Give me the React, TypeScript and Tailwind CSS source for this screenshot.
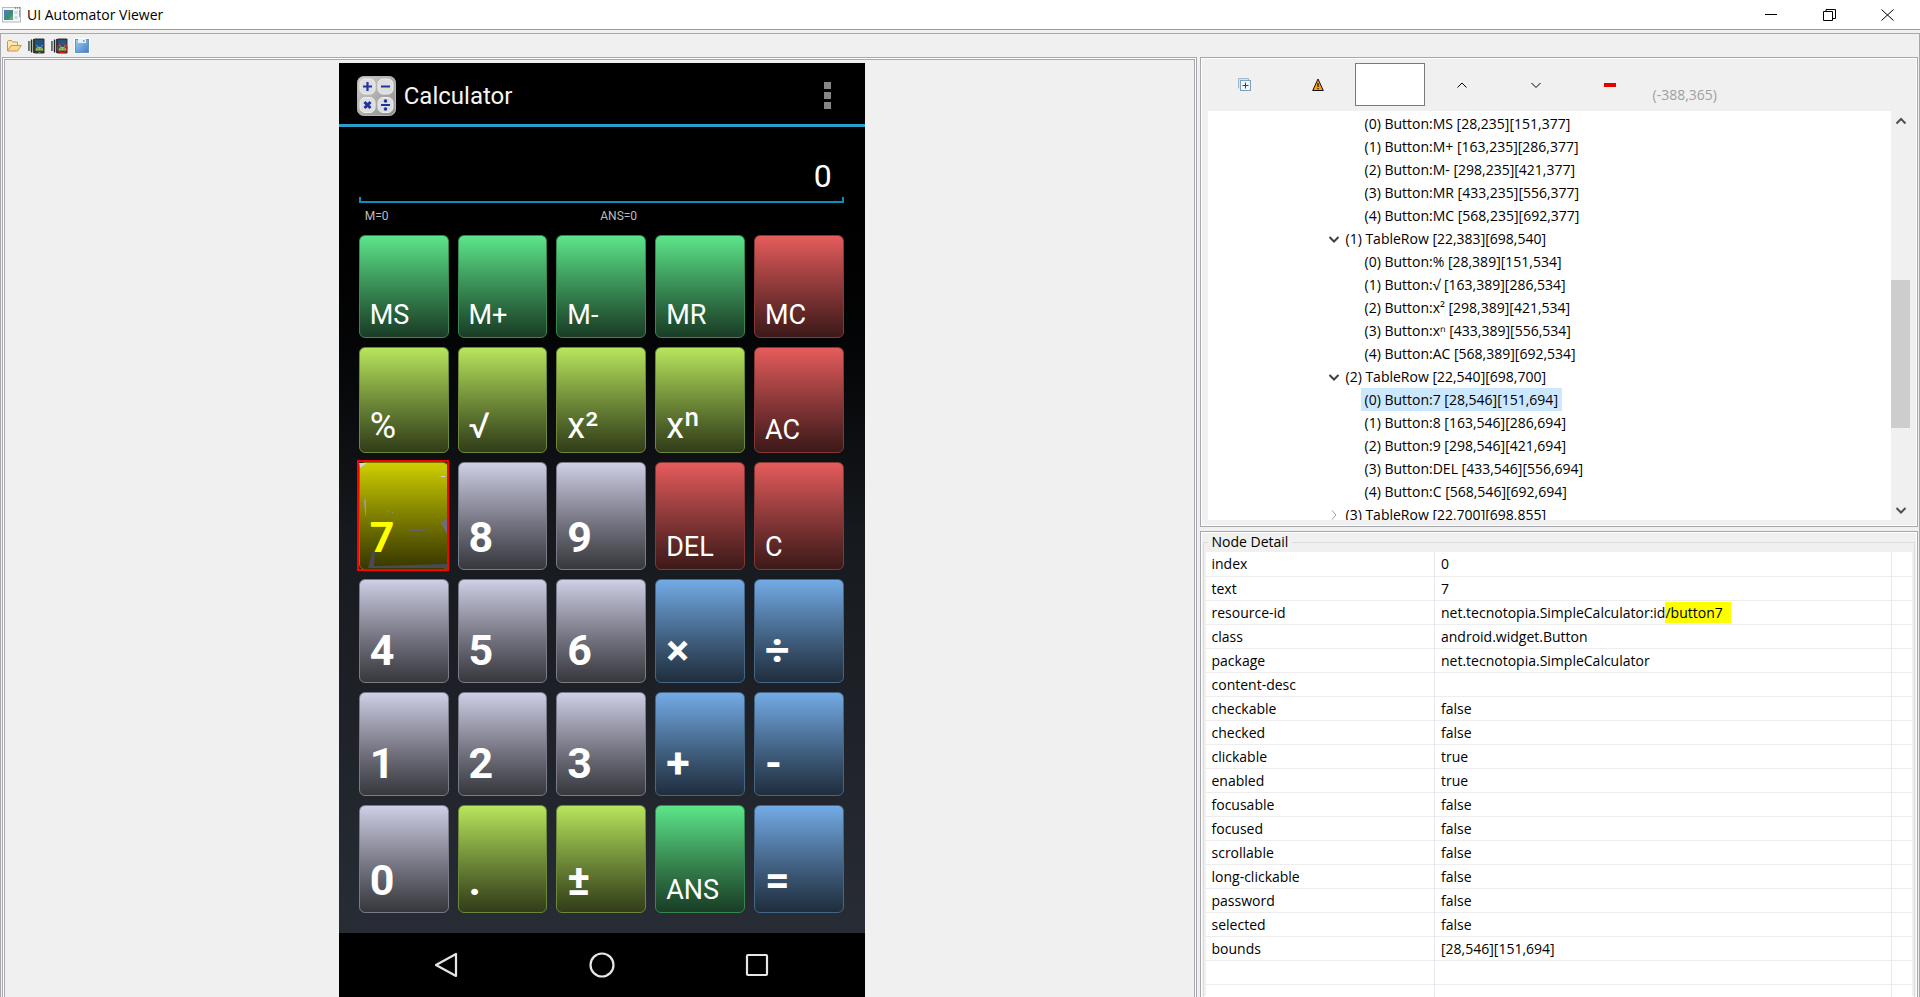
import { ReactNode } from "react";

type Tone = "green" | "lime" | "red" | "gray" | "blue" | "marked";
type Size = "sm" | "md" | "lg";

interface Key {
  label: string;
  tone: Tone;
  size: Size;
}

const tones: Record<Tone, string> = {
  green: "from-[#5ce68a] to-[#193d25] border-[#37884f]",
  lime: "from-[#b8e65c] to-[#313d19] border-[#6d8837]",
  red: "from-[#e65c5c] to-[#3d1919] border-[#883737]",
  gray: "from-[#cfcfe6] to-[#37373d] border-[#7a7a88]",
  blue: "from-[#73abe6] to-[#1f2e3d] border-[#446688]",
  marked: "from-[#cfcf00] to-[#373700] border-[#7a7a00]",
};

const sizes: Record<Size, string> = {
  sm: "text-[27px] leading-8 pb-1.5",
  md: "text-4xl pb-1.5",
  lg: "text-[43px] leading-[48px] font-bold pb-2",
};

const keys: Key[] = [
  { label: "MS", tone: "green", size: "sm" },
  { label: "M+", tone: "green", size: "sm" },
  { label: "M-", tone: "green", size: "sm" },
  { label: "MR", tone: "green", size: "sm" },
  { label: "MC", tone: "red", size: "sm" },
  { label: "%", tone: "lime", size: "md" },
  { label: "√", tone: "lime", size: "md" },
  { label: "x²", tone: "lime", size: "md" },
  { label: "xⁿ", tone: "lime", size: "md" },
  { label: "AC", tone: "red", size: "sm" },
  { label: "7", tone: "marked", size: "lg" },
  { label: "8", tone: "gray", size: "lg" },
  { label: "9", tone: "gray", size: "lg" },
  { label: "DEL", tone: "red", size: "sm" },
  { label: "C", tone: "red", size: "sm" },
  { label: "4", tone: "gray", size: "lg" },
  { label: "5", tone: "gray", size: "lg" },
  { label: "6", tone: "gray", size: "lg" },
  { label: "×", tone: "blue", size: "lg" },
  { label: "÷", tone: "blue", size: "lg" },
  { label: "1", tone: "gray", size: "lg" },
  { label: "2", tone: "gray", size: "lg" },
  { label: "3", tone: "gray", size: "lg" },
  { label: "+", tone: "blue", size: "lg" },
  { label: "-", tone: "blue", size: "lg" },
  { label: "0", tone: "gray", size: "lg" },
  { label: ".", tone: "lime", size: "lg" },
  { label: "±", tone: "lime", size: "lg" },
  { label: "ANS", tone: "green", size: "sm" },
  { label: "=", tone: "blue", size: "lg" },
];

interface TreeNode {
  label: string;
  kind: "leaf" | "open" | "closed";
  selected?: boolean;
}

const nodes: TreeNode[] = [
  { label: "(0) Button:MS [28,235][151,377]", kind: "leaf" },
  { label: "(1) Button:M+ [163,235][286,377]", kind: "leaf" },
  { label: "(2) Button:M- [298,235][421,377]", kind: "leaf" },
  { label: "(3) Button:MR [433,235][556,377]", kind: "leaf" },
  { label: "(4) Button:MC [568,235][692,377]", kind: "leaf" },
  { label: "(1) TableRow [22,383][698,540]", kind: "open" },
  { label: "(0) Button:% [28,389][151,534]", kind: "leaf" },
  { label: "(1) Button:√ [163,389][286,534]", kind: "leaf" },
  { label: "(2) Button:x² [298,389][421,534]", kind: "leaf" },
  { label: "(3) Button:xⁿ [433,389][556,534]", kind: "leaf" },
  { label: "(4) Button:AC [568,389][692,534]", kind: "leaf" },
  { label: "(2) TableRow [22,540][698,700]", kind: "open" },
  { label: "(0) Button:7 [28,546][151,694]", kind: "leaf", selected: true },
  { label: "(1) Button:8 [163,546][286,694]", kind: "leaf" },
  { label: "(2) Button:9 [298,546][421,694]", kind: "leaf" },
  { label: "(3) Button:DEL [433,546][556,694]", kind: "leaf" },
  { label: "(4) Button:C [568,546][692,694]", kind: "leaf" },
  { label: "(3) TableRow [22,700][698,855]", kind: "closed" },
];

const details: [string, ReactNode][] = [
  ["index", "0"],
  ["text", "7"],
  [
    "resource-id",
    <>
      net.tecnotopia.SimpleCalculator:id
      <mark className="bg-[#ffff00] text-black pr-2 py-px">/button7</mark>
    </>,
  ],
  ["class", "android.widget.Button"],
  ["package", "net.tecnotopia.SimpleCalculator"],
  ["content-desc", ""],
  ["checkable", "false"],
  ["checked", "false"],
  ["clickable", "true"],
  ["enabled", "true"],
  ["focusable", "false"],
  ["focused", "false"],
  ["scrollable", "false"],
  ["long-clickable", "false"],
  ["password", "false"],
  ["selected", "false"],
  ["bounds", "[28,546][151,694]"],
  ["", ""],
  ["", ""],
];

const Chevron = ({ dir, className }: { dir: "up" | "down" | "right"; className?: string }) => {
  const d = {
    up: "M1.5 8.5 6 4l4.5 4.5",
    down: "M1.5 4 6 8.5 10.5 4",
    right: "M4 1.5 8 6l-4 4.5",
  }[dir];
  return (
    <svg width="12" height="12" viewBox="0 0 12 12" className={className} fill="none" stroke="currentColor">
      <path d={d} />
    </svg>
  );
};

const AppIcon = () => (
  <svg width="20" height="16" viewBox="0 0 20 16">
    <rect x="0.5" y="0.5" width="18" height="14.500" fill="#f4f5f7" stroke="#b4bac2" />
    <path d="M13 1h1m1 0h1m1 0h1" stroke="#2f4a7a" />
    <rect x="2" y="3" width="9" height="10" fill="#3f8a78" />
    <path d="M2 3h7L2 11z" fill="#4d7fa8" />
    <path d="M6 13l5-6v6z" fill="#57a86c" />
    <path d="M12.500 5.500h3M12.500 10.500h3" stroke="#d3d7de" strokeWidth="3" />
    <path d="M17.500 3v7" stroke="#7fb58c" />
  </svg>
);

const FolderIcon = () => (
  <svg width="16" height="16" viewBox="0 0 16 16">
    <path d="M1.5 13V3.500l1-1h3l1 1.500h5v3" fill="#fbe8b4" stroke="#c9974a" />
    <path d="M1.5 13 5 7.500h10.300L11.500 13z" fill="#fbd98f" stroke="#c9974a" />
  </svg>
);

const DeviceIcon = ({ compressed }: { compressed?: boolean }) => (
  <svg width="17" height="16" viewBox="0 0 17 16">
    <path d="M1 3v10M3.500 1.500v13M5.700 1v14" stroke="#26282a" strokeWidth="1.300" />
    <path d="M2.200 3v10M4.600 2v12" stroke="#9bb8a4" />
    <rect x="6" y="0.500" width="10.500" height="15" rx="1" fill="#3b2f2b" />
    <rect x="7" y="2" width="8.500" height="11.500" fill="#1f5583" />
    <path d="M7.500 12.500c0-5 7.800-5 7.800 0z" fill="#a4c639" />
    <path d="m8.500 7 1 1.500m5-1.500-1 1.500" stroke="#a4c639" />
    <path d="M9.500 10.800h1m2 0h1" stroke="#1f5583" />
    <path d="M10.500 14.500h2" stroke="#8a807a" />
    {compressed && <circle cx="11.200" cy="10" r="4.700" fill="none" stroke="#e01b1b" strokeWidth="1.200" />}
  </svg>
);

const SaveIcon = () => (
  <svg width="16" height="16" viewBox="0 0 16 16">
    <defs>
      <linearGradient id="disk" x1="0" y1="0" x2="1" y2="1">
        <stop offset="0" stopColor="#a5cdf0" />
        <stop offset="1" stopColor="#3f7fc4" />
      </linearGradient>
    </defs>
    <rect width="16" height="16" fill="#fff" />
    <rect x="1.5" y="1.5" width="13" height="13" fill="url(#disk)" stroke="#5f93c9" />
    <rect x="4" y="1" width="8" height="4" fill="#e3effb" />
    <rect x="9" y="2" width="1.500" height="2" fill="#6fa5dc" />
  </svg>
);

const CalculatorIcon = () => (
  <svg width="39" height="40" viewBox="0 0 39 40">
    <defs>
      <linearGradient id="plate" x1="0" y1="0" x2="1" y2="1">
        <stop offset="0" stopColor="#d0d0d0" />
        <stop offset="1" stopColor="#8c8c8c" />
      </linearGradient>
    </defs>
    <rect x="0.5" y="0.5" width="38" height="39" rx="6" fill="url(#plate)" stroke="#b5b5b5" />
    <g fill="#dedede" stroke="#eeeeee">
      <rect x="3" y="3" width="15" height="15" rx="5" />
      <rect x="21" y="3" width="15" height="15" rx="5" />
      <rect x="3" y="21.5" width="15" height="15" rx="5" />
      <rect x="21" y="21.5" width="15" height="15" rx="5" />
    </g>
    <g stroke="#20359f" strokeWidth="2.200" fill="none">
      <path d="M6 10.500h9M10.500 6v9M24 10.500h9M24 29h9" />
      <path d="M7.500 26l6 6m0-6-6 6" strokeWidth="3" />
    </g>
    <circle cx="28.5" cy="25" r="1.800" fill="#20359f" />
    <circle cx="28.5" cy="33" r="1.800" fill="#20359f" />
  </svg>
);

// red bounds of the picked node, with the spots the marker pen missed
const SelectionMarker = () => (
  <svg className="absolute -top-[3px] -left-[3px]" width="92" height="111" viewBox="0 0 92 111">
    <path d="M7 40l2-1v18l-1-5z" fill="#9a9aac" />
    <path d="M84 63l6-5v16z" fill="#6d6d7c" />
    <path d="M52 70h12l6-2v2l-6 1H52z" fill="#63636f" />
    <path d="M16 90l2 2-1 14 73-2v4H11z" fill="#4a4a55" />
    <path d="M84 16h4v1h-4zM2 3h8l-7 5z" fill="#cfcfe6" />
    <path d="M31 51h1v1h-1zM35 52h1v1h-1z" fill="#8d8d9e" />
    <rect x="1" y="1" width="90" height="109" fill="none" stroke="#f00" strokeWidth="2" />
  </svg>
);

const CalcKey = ({ label, tone, size }: Key) => (
  <button
    className={`relative flex items-end rounded-md border bg-linear-to-b pl-2.5 text-left ${tones[tone]} ${
      tone === "marked" ? "text-[#ffff00]" : "text-white"
    }`}
  >
    <span className={sizes[size]}>{label}</span>
    {tone === "marked" && <SelectionMarker />}
  </button>
);

const Phone = () => (
  <div className="flex w-[526px] shrink-0 flex-col bg-black font-[Roboto,sans-serif] text-white">
    <div className="flex h-[61px] items-center pt-1 pr-[34px] pl-[18px]">
      <CalculatorIcon />
      <h1 className="ml-2 grow text-2xl text-gray-100">Calculator</h1>
      <button aria-label="More options" className="flex flex-col gap-[3px]">
        <span className="size-[7px] bg-[#868686]" />
        <span className="size-[7px] bg-[#868686]" />
        <span className="size-[7px] bg-[#868686]" />
      </button>
    </div>
    <div className="flex flex-col border-t-3 border-[#2a9fcb] bg-linear-to-b from-black via-[#16191d] to-[#282c35] pr-[21px] pb-5 pl-5">
      <input
        aria-label="Display"
        readOnly
        value="0"
        className="mt-[30px] h-10 w-full bg-transparent px-3 text-right text-[32px] outline-none"
      />
      <div className="h-[6px] border-2 border-t-0 border-[#0a8fc0]" />
      <div className="grid h-8 grid-cols-2 pt-[5px] pl-1.5 text-xs text-[#bdbdbd]">
        <span>M=0</span>
        <span className="-ml-1">ANS=0</span>
      </div>
      <div className="grid grid-cols-5 grid-rows-[103px_106px_108px_104px_104px_108px] gap-[9px]">
        {keys.map((key) => (
          <CalcKey key={key.label} {...key} />
        ))}
      </div>
    </div>
    <div className="flex grow items-center justify-between px-[95px] text-[#e6e6e6]">
      <button aria-label="Back">
        <svg width="26" height="26" viewBox="0 0 26 26" fill="none" stroke="currentColor" strokeWidth="2.200">
          <path d="M22 2v22L2 13z" strokeLinejoin="round" />
        </svg>
      </button>
      <button aria-label="Home">
        <svg width="26" height="26" viewBox="0 0 26 26" fill="none" stroke="currentColor" strokeWidth="2.200">
          <circle cx="13" cy="13" r="11.500" />
        </svg>
      </button>
      <button aria-label="Recent apps">
        <svg width="26" height="26" viewBox="0 0 26 26" fill="none" stroke="currentColor" strokeWidth="2.200">
          <rect x="3" y="3" width="20" height="20" rx="1" />
        </svg>
      </button>
    </div>
  </div>
);

const TreePanel = () => (
  <section className="flex h-[470px] shrink-0 flex-col border border-[#a7a8ad] px-[7px] pb-1.5 shadow-[inset_0_0_0_1px_#fff]">
    <div className="flex h-[54px] items-center">
      <button aria-label="Expand all" className="flex w-[74px] justify-center">
        <svg width="13" height="13" viewBox="0 0 13 13">
          <path d="M0.5 10.500v-10h10v2" fill="#d7e6f0" stroke="#9db8cb" />
          <rect x="2.5" y="2.5" width="10" height="10" fill="#eef8fd" stroke="#7f9fb8" />
          <path d="M4.500 7.500h6M7.500 4.500v6" stroke="#0b4f86" />
        </svg>
      </button>
      <button aria-label="Toggle NAF nodes" className="flex w-[73px] justify-center">
        <svg width="12" height="13" viewBox="0 0 12 13">
          <path d="M6 1 11.300 12.500H0.700z" fill="#ff9c0a" stroke="#111" />
          <path d="M6 5v4M6 10v1.200" stroke="#111" strokeWidth="1.200" />
        </svg>
      </button>
      <input aria-label="Search" className="h-[43px] w-[70px] border border-[#7a7a7a] bg-white outline-none" />
      <button aria-label="Previous" className="flex w-[74px] justify-center text-black">
        <Chevron dir="up" />
      </button>
      <button aria-label="Next" className="flex w-[74px] justify-center text-black">
        <Chevron dir="down" />
      </button>
      <button aria-label="Clear" className="flex w-[74px] justify-center">
        <span className="h-1 w-3 bg-[#e60000]" />
      </button>
      <span className="ml-1.5 pt-5 text-[#a0a0a0]">(-388,365)</span>
    </div>
    <div className="flex min-h-0 grow">
      <ul className="grow overflow-hidden bg-white pt-px">
        {nodes.map(({ label, kind, selected }) => (
          <li
            key={label}
            className={`flex h-[23px] items-center gap-0.5 ${kind === "leaf" ? "pl-[153px]" : "pl-[120px]"}`}
          >
            {kind === "open" && <Chevron dir="down" className="stroke-2 text-[#404040]" />}
            {kind === "closed" && <Chevron dir="right" className="text-[#a0a0a0]" />}
            <span className={`px-1 leading-[23px] whitespace-nowrap ${selected ? "bg-[#cce8ff]" : ""}`}>{label}</span>
          </li>
        ))}
      </ul>
      <div className="flex w-[19px] flex-col items-center py-1 text-[#505050]">
        <Chevron dir="up" className="stroke-2" />
        <div className="mt-[153px] h-[148px] w-full bg-[#cdcdcd]" />
        <Chevron dir="down" className="mt-auto stroke-2" />
      </div>
    </div>
  </section>
);

const DetailPanel = () => (
  <section className="min-h-0 grow overflow-hidden border border-b-0 border-[#a7a8ad] px-0.5 shadow-[inset_0_0_0_1px_#fff]">
    <fieldset className="border border-[#dcdcdc] px-0.5">
      <legend className="ml-0.5 px-1 leading-5">Node Detail</legend>
      <table className="w-full table-fixed border-collapse bg-white">
        <colgroup>
          <col className="w-[229px]" />
          <col />
          <col className="w-[21px]" />
        </colgroup>
        <tbody>
          {details.map(([name, value], i) => (
            <tr key={i} className="h-6 border-b border-[#ededf0]">
              <td className="border-r border-[#e6eaf2] px-1.5 leading-[23px]">{name}</td>
              <td className="border-r border-[#e6eaf2] px-1.5 leading-[23px]">{value}</td>
              <td />
            </tr>
          ))}
        </tbody>
      </table>
    </fieldset>
  </section>
);

export default function App() {
  return (
    <div className="flex h-screen flex-col overflow-hidden bg-[#f0f0f0] font-['Open_Sans',sans-serif] text-sm text-black">
      <header className="flex h-[30px] shrink-0 items-center border-b border-[#9a9a9a] bg-white pr-1 pl-0.5">
        <AppIcon />
        <span className="ml-[5px] grow">UI Automator Viewer</span>
        <button aria-label="Minimize" className="flex w-[58px] justify-center">
          <svg width="12" height="12" viewBox="0 0 12 12" stroke="#000">
            <path d="M0 5.500h12" />
          </svg>
        </button>
        <button aria-label="Restore" className="flex w-[58px] justify-center">
          <svg width="13" height="12" viewBox="0 0 13 12" fill="none" stroke="#000">
            <path d="M0.5 2.500h9v9h-9zM3 2.500v-2h9.500v9H10" />
          </svg>
        </button>
        <button aria-label="Close" className="flex w-[58px] justify-center">
          <svg width="13" height="12" viewBox="0 0 13 12" stroke="#000">
            <path d="M0.5 0.500l12 11m0-11-12 11" />
          </svg>
        </button>
      </header>
      <main className="mt-[3px] flex min-h-0 grow flex-col border border-b-0 border-[#a7a8ad]">
        <div className="flex h-[23px] shrink-0 items-center gap-1.5 pl-[5px]">
          <button aria-label="Open">
            <FolderIcon />
          </button>
          <button aria-label="Device screenshot">
            <DeviceIcon />
          </button>
          <button aria-label="Device screenshot with compressed hierarchy">
            <DeviceIcon compressed />
          </button>
          <button aria-label="Save">
            <SaveIcon />
          </button>
        </div>
        <div className="flex min-h-0 grow gap-[3px] px-px">
          <section className="flex grow border border-b-0 border-[#a7a8ad] bg-white px-px pt-px">
            <div className="flex grow justify-center overflow-hidden border border-b-0 border-[#a7a8ad] bg-[#f0f0f0] pt-[3px] pl-[5px]">
              <Phone />
            </div>
          </section>
          <aside className="flex w-[37.5%] shrink-0 flex-col gap-1">
            <TreePanel />
            <DetailPanel />
          </aside>
        </div>
      </main>
    </div>
  );
}
